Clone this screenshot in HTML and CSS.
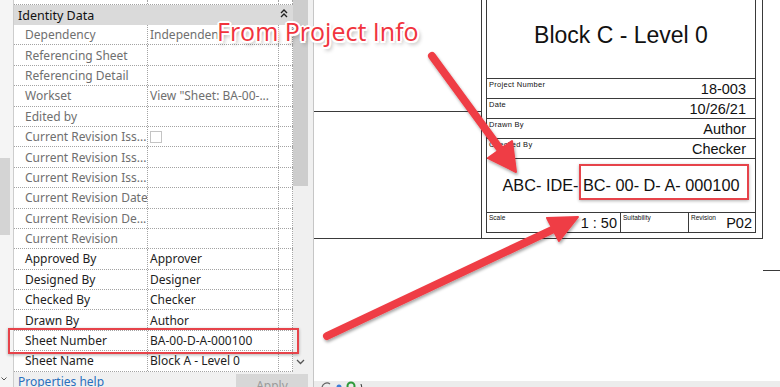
FILE: index.html
```html
<!DOCTYPE html>
<html lang="en">
<head>
  <meta charset="UTF-8">
  <meta name="viewport" content="width=device-width, initial-scale=1.0">
  <title>Sheet properties</title>
  <link rel="stylesheet" href="styles.css">
</head>
<body>
  <div class="app">
    <div class="side">
      <div class="strip">
        <div class="strip-thumb"></div>
        <svg class="strip-chev" width="6" height="4" viewBox="0 0 6 4"><path d="M0.5 0.5 L3 3 L5.5 0.5" fill="none" stroke="#555" stroke-width="1"/></svg>
      </div>

      <div class="props">
        <div class="props-body">
          <div class="grid">
            <div class="row row-top"><div class="c-label"></div><div class="c-value"></div><div class="c-extra"></div></div>
            <div class="group">
              <span>Identity Data</span>
              <svg class="collapse" width="8" height="9" viewBox="0 0 8 9"><path d="M1 4 L4 1 L7 4 M1 8 L4 5 L7 8" fill="none" stroke="#222" stroke-width="1.4"/></svg>
            </div>
            <div class="row ro"><div class="c-label">Dependency</div><div class="c-value">Independent</div><div class="c-extra"></div></div>
            <div class="row ro"><div class="c-label">Referencing Sheet</div><div class="c-value"></div><div class="c-extra"></div></div>
            <div class="row ro"><div class="c-label">Referencing Detail</div><div class="c-value"></div><div class="c-extra"></div></div>
            <div class="row ro"><div class="c-label">Workset</div><div class="c-value">View "Sheet: BA-00-...</div><div class="c-extra"></div></div>
            <div class="row ro"><div class="c-label">Edited by</div><div class="c-value"></div><div class="c-extra"></div></div>
            <div class="row ro"><div class="c-label">Current Revision Iss...</div><div class="c-value"><span class="check"></span></div><div class="c-extra"></div></div>
            <div class="row ro"><div class="c-label">Current Revision Iss...</div><div class="c-value"></div><div class="c-extra"></div></div>
            <div class="row ro"><div class="c-label">Current Revision Iss...</div><div class="c-value"></div><div class="c-extra"></div></div>
            <div class="row ro"><div class="c-label">Current Revision Date</div><div class="c-value"></div><div class="c-extra"></div></div>
            <div class="row ro"><div class="c-label">Current Revision De...</div><div class="c-value"></div><div class="c-extra"></div></div>
            <div class="row ro"><div class="c-label">Current Revision</div><div class="c-value"></div><div class="c-extra"></div></div>
            <div class="row"><div class="c-label">Approved By</div><div class="c-value">Approver</div><div class="c-extra"></div></div>
            <div class="row"><div class="c-label">Designed By</div><div class="c-value">Designer</div><div class="c-extra"></div></div>
            <div class="row"><div class="c-label">Checked By</div><div class="c-value">Checker</div><div class="c-extra"></div></div>
            <div class="row"><div class="c-label">Drawn By</div><div class="c-value">Author</div><div class="c-extra"></div></div>
            <div class="row hl"><div class="c-label">Sheet Number</div><div class="c-value">BA-00-D-A-000100</div><div class="c-extra"></div></div>
            <div class="row"><div class="c-label">Sheet Name</div><div class="c-value">Block A - Level 0</div><div class="c-extra"></div></div>
          </div>
          <div class="vscroll">
            <div class="thumb"></div>
            <svg class="vscroll-down" width="9" height="6" viewBox="0 0 9 6"><path d="M1 1 L4.5 4.5 L8 1" fill="none" stroke="#555" stroke-width="1.3"/></svg>
          </div>
        </div>
        <div class="props-foot">
          <a class="help" href="#">Properties help</a>
          <button class="apply">Apply</button>
        </div>
      </div>
    </div>

    <div class="canvas">
      <div class="sheet">
        <div class="sheet-main"><div class="sheet-band"></div></div>
        <div class="titleblock">
          <div class="tb">
            <div class="tb-title">Block C - Level 0</div>
            <div class="tb-field"><span class="tb-label">Project Number</span><span class="tb-value">18-003</span></div>
            <div class="tb-field"><span class="tb-label">Date</span><span class="tb-value">10/26/21</span></div>
            <div class="tb-field"><span class="tb-label">Drawn By</span><span class="tb-value">Author</span></div>
            <div class="tb-field"><span class="tb-label">Checked By</span><span class="tb-value">Checker</span></div>
            <div class="tb-number"><span>ABC- IDE- <span class="callout">BC- 00- D- A- 000100</span></span></div>
            <div class="tb-foot">
              <div class="tb-cell cell-scale"><span class="tb-label">Scale</span><span class="tb-value">1 : 50</span></div>
              <div class="tb-cell cell-suit"><span class="tb-label">Suitability</span></div>
              <div class="tb-cell cell-rev"><span class="tb-label">Revision</span><span class="tb-value">P02</span></div>
            </div>
          </div>
        </div>
      </div>
      <div class="stub"></div>
      <div class="viewbar">
        <svg width="50" height="8" viewBox="0 0 50 8">
          <path d="M5 7 A5 5 0 0 1 13 3" fill="none" stroke="#666" stroke-width="1.3"/>
          <circle cx="22" cy="6" r="2.5" fill="#3b7dd8"/>
          <circle cx="34" cy="5" r="3.5" fill="none" stroke="#2f9a3a" stroke-width="2"/>
          <path d="M44 3 L45 7" stroke="#333" stroke-width="1"/>
        </svg>
      </div>
    </div>
  </div>

  <!-- annotations drawn over the screenshot -->
  <div class="note">From Project Info</div>
  <svg class="arrows" width="780" height="387" viewBox="0 0 780 387">
    <defs>
      <filter id="shadow" x="-20%" y="-20%" width="140%" height="140%">
        <feDropShadow dx="1" dy="2" stdDeviation="1.6" flood-color="#000" flood-opacity="0.35"/>
      </filter>
    </defs>
    <g fill="#ef3d45" stroke="#ef3d45" stroke-linejoin="round" filter="url(#shadow)">
      <line x1="432" y1="56" x2="503" y2="153" stroke-width="8" stroke-linecap="round"/>
      <polygon points="516,172 488,158 512,141" stroke-width="2"/>
      <line x1="327" y1="336" x2="554" y2="229" stroke-width="8" stroke-linecap="round"/>
      <polygon points="578,217 559,241 547,218" stroke-width="2"/>
    </g>
  </svg>
</body>
</html>
```

FILE: styles.css
```css
body {
  margin: 0;
  width: 780px;
  height: 387px;
  overflow: hidden;
  position: relative;
  background-color: #ffffff;
  font-family: "Noto Sans", "Open Sans", sans-serif;
  color: #1e1e1e;
}
.app {
  display: flex;
  height: 387px;
}

/* properties palette */
.side {
  width: 314px;
  flex: none;
  display: flex;
  box-sizing: border-box;
  background-color: #f0f0f0;
  border-right: 1px solid #c6c6c6;
}
.strip {
  width: 14px;
  flex: none;
  box-sizing: border-box;
  border-right: 1px solid #cdcdcd;
  background-color: #f5f5f5;
  display: flex;
  flex-direction: column;
  align-items: flex-start;
}
.strip-thumb {
  margin-top: 158px;
  width: 10px;
  height: 77px;
  background-color: #d4d4d4;
}
.strip-chev {
  margin-top: auto;
  margin-bottom: 6px;
  margin-left: 1px;
}
.props {
  width: 299px;
  display: flex;
  flex-direction: column;
}
.props-body {
  display: flex;
  height: 372px;
}
.grid {
  width: 279px;
  background-color: #ffffff;
  font-size: 12px;
  display: flex;
  flex-direction: column;
}
.row {
  display: flex;
  height: 20.4px;
  flex: none;
  box-sizing: border-box;
  border-bottom: 1px dotted #a3a3a3;
}
.row-top {
  height: 5px;
}
.row > div {
  box-sizing: border-box;
  border-right: 1px dotted #a3a3a3;
  display: flex;
  align-items: center;
  white-space: nowrap;
  overflow: hidden;
}
.c-label {
  width: 134px;
  padding-left: 11px;
}
.c-value {
  width: 131px;
  padding-left: 2px;
}
.c-extra {
  width: 14px;
}
.ro {
  color: #6f6f6f;
}
.check {
  width: 12px;
  height: 12px;
  box-sizing: border-box;
  border: 1px solid #c4c4c4;
  background-color: #fff;
}
.group {
  height: 20px;
  flex: none;
  display: flex;
  align-items: center;
  justify-content: space-between;
  padding: 0 5px 0 4px;
  background-color: #dadada;
  color: #111;
  font-size: 12.5px;
}
.collapse {
  margin-top: -4px;
}
.row.hl {
  position: relative;
}
.row.hl::after {
  content: '';
  position: absolute;
  left: -6px;
  right: -6px;
  top: -3px;
  bottom: -4px;
  border: 2px solid #e6434a;
  box-shadow: 0 1px 3px rgba(0, 0, 0, 0.3);
}
.vscroll {
  width: 15px;
  display: flex;
  flex-direction: column;
  align-items: center;
  background-color: #f0f0f0;
}
.thumb {
  width: 15px;
  height: 186px;
  background-color: #cdcdcd;
}
.vscroll-down {
  margin-top: auto;
  margin-bottom: 7px;
}
.props-foot {
  height: 15px;
  display: flex;
  justify-content: space-between;
  align-items: flex-start;
  overflow: hidden;
}
.help {
  margin: 1px 0 0 4px;
  font-size: 12px;
  color: #2a6fbe;
  text-decoration: none;
}
.apply {
  margin: 2px 5px 0 0;
  width: 72px;
  height: 22px;
  border: none;
  background-color: #d7d7d7;
  color: #9a9a9a;
  font-family: "Noto Sans", sans-serif;
  font-size: 12px;
  padding: 0;
  align-self: flex-start;
}

/* drawing area */
.canvas {
  flex: 1;
  display: flex;
  flex-direction: column;
  background-color: #ffffff;
  font-family: "Liberation Sans", Arial, sans-serif;
  color: #111;
}
.sheet {
  width: 449px;
  height: 239px;
  flex: none;
  display: flex;
  box-sizing: border-box;
  border-right: 1px solid #3a3a3a;
  border-bottom: 1px solid #3a3a3a;
}
.sheet-main {
  width: 167px;
}
.sheet-band {
  height: 112px;
  box-sizing: border-box;
  border-bottom: 1px solid #3a3a3a;
}
.titleblock {
  flex: 1;
  border-left: 1px solid #3a3a3a;
  padding: 0 6px 5px 4px;
}
.tb {
  height: 233px;
  box-sizing: border-box;
  border: 1px solid #3a3a3a;
  border-top: none;
  display: flex;
  flex-direction: column;
}
.tb-title {
  height: 79px;
  box-sizing: border-box;
  border-bottom: 1px solid #3a3a3a;
  display: flex;
  align-items: center;
  justify-content: center;
  padding-bottom: 8px;
  font-size: 23px;
}
.tb-field {
  height: 20px;
  box-sizing: border-box;
  border-bottom: 1px solid #3a3a3a;
  display: flex;
  justify-content: space-between;
  padding: 0 9px 0 2px;
}
.tb-label {
  align-self: flex-start;
  margin-top: 2px;
  font-size: 7.5px;
  letter-spacing: 0.3px;
  line-height: 1;
}
.tb-value {
  align-self: flex-end;
  font-size: 14.5px;
  line-height: 1;
  margin-bottom: 2px;
}
.tb-number {
  height: 54px;
  box-sizing: border-box;
  border-bottom: 1px solid #3a3a3a;
  display: flex;
  align-items: center;
  justify-content: center;
  font-size: 16.3px;
  white-space: pre;
}
.callout {
  position: relative;
}
.callout::after {
  content: '';
  position: absolute;
  left: -4px;
  right: -9px;
  top: -12px;
  bottom: -6px;
  border: 2px solid #e6434a;
  box-shadow: 0 1px 3px rgba(0, 0, 0, 0.3);
}
.tb-foot {
  flex: 1;
  display: flex;
}
.tb-cell {
  box-sizing: border-box;
  display: flex;
  justify-content: space-between;
  padding: 0 3px 0 2px;
}
.cell-scale {
  width: 134px;
  border-right: 1px solid #3a3a3a;
}
.cell-suit {
  width: 68px;
  border-right: 1px solid #3a3a3a;
}
.cell-rev {
  flex: 1;
}
.tb-cell .tb-label {
  font-size: 6.5px;
  letter-spacing: 0;
}
.stub {
  align-self: flex-end;
  width: 17px;
  margin-top: 31px;
  border-top: 1px solid #3a3a3a;
}
.viewbar {
  margin-top: auto;
  height: 6px;
  background-color: #ececec;
  overflow: hidden;
  padding-left: 3px;
}
.viewbar svg {
  display: block;
}

/* annotation layer */
.note {
  position: absolute;
  left: 217px;
  top: 19px;
  font-family: "Open Sans", sans-serif;
  font-size: 25px;
  line-height: 25px;
  color: #f1333d;
  white-space: nowrap;
  text-shadow:
    -1.5px -1.5px 0 #fff, 1.5px -1.5px 0 #fff, -1.5px 1.5px 0 #fff, 1.5px 1.5px 0 #fff,
    0 -2px 0 #fff, 0 2px 0 #fff, -2px 0 0 #fff, 2px 0 0 #fff,
    2px 3px 4px rgba(0, 0, 0, 0.45);
}
.arrows {
  position: absolute;
  left: 0;
  top: 0;
  pointer-events: none;
}
```
